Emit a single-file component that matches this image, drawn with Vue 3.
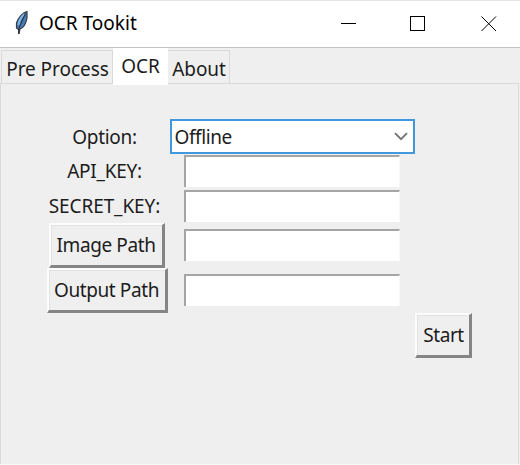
<script setup>
import { ref } from 'vue'

const tabs = ['Pre Process', 'OCR', 'About']
const active = ref('OCR')
</script>

<template>
  <div class="window">
    <header class="titlebar">
      <svg class="feather" width="16" height="26" viewBox="0 0 16 26">
        <path d="M13 1.5C9 2 4 8 2.5 13L2.5 18L4.5 19.5L5 24L6 19C10 18 12 13 13 8Z" fill="#477db9" stroke="#343b43" stroke-width="1.2" />
        <path d="M10.5 4C7 7 5 11 4.5 15" fill="none" stroke="#83b7e8" stroke-width="2" />
        <path d="M11.5 3.5C9 9 7 13 5 18L4.7 24" fill="none" stroke="#26323f" stroke-width="1.1" />
      </svg>
      <span class="title">OCR Tookit</span>
      <svg class="controls" width="156" height="17" viewBox="0 0 156 17" fill="none" stroke="#000" stroke-width="1">
        <path d="M0 8.5H15" />
        <rect x="69.5" y="1.5" width="14" height="14" />
        <path d="M140.5 1.5L155 16M155 1.5L140.5 16" />
      </svg>
    </header>
    <nav class="tabs">
      <button
        v-for="tab in tabs"
        :key="tab"
        class="tab"
        :class="{ active: tab === active }"
        @click="active = tab"
      >{{ tab }}</button>
    </nav>
    <main class="pane">
      <div class="form">
        <label class="tight">Option:</label>
        <div class="combo">
          <span>Offline</span>
          <svg width="14" height="9" viewBox="0 0 14 9"><path d="M1 1.2L7 7.2L13 1.2" fill="none" stroke="#747474" stroke-width="1.9" /></svg>
        </div>
        <i></i>
        <label class="key">API_KEY:</label><input class="entry"><i></i>
        <label>SECRET_KEY:</label><input class="entry"><i></i>
        <button class="push image">Image Path</button><input class="entry raised"><i></i>
        <button class="push output">Output Path</button><input class="entry raised"><i></i>
        <i></i><i></i><button class="push start">Start</button>
      </div>
    </main>
  </div>
</template>

<style>
body { margin: 0; overflow: hidden; }
</style>

<style scoped>
* { box-sizing: border-box; }
.window {
  width: 520px; height: 465px; background: #efefef; display: flex; flex-direction: column;
  font: 19px/24px "Noto Sans", "Open Sans", sans-serif; color: #1c1c1c; white-space: nowrap;
  border-bottom: 1px solid #f8f8f8;
}
button { font: inherit; color: inherit; padding: 0; margin: 0; border-radius: 0; }
.titlebar {
  height: 48px; flex: none; background: #fff; border-top: 1px solid #e5e5e5; border-bottom: 1px solid #c3c3c3;
  display: flex; align-items: center; padding-left: 14px; color: #000;
}
.feather { flex: none; margin-top: -3px; }
.title { width: 311px; padding: 0 0 2px 9px; }
.controls { flex: none; margin-top: -1px; }
.tabs { height: 35px; flex: none; display: flex; align-items: flex-end; padding-left: 1px; }
.tab {
  height: 33px; width: 112px; background: #efefef; border: 1px solid #d9d9d9; border-width: 1px 1px 0 1px;
  display: flex; align-items: center; justify-content: center; padding: 4px 0 0 1px; letter-spacing: -0.05px;
}
.tab.active { width: 55px; height: 37px; background: #fff; border: 0; margin-bottom: -2px; padding: 0 0 1px; z-index: 1; position: relative; }
.tab:last-child { width: 62px; border-left: 0; }
.pane { flex: 1; margin-right: 1px; border: solid #dadada; border-width: 1px 1px 0 1px; padding: 35px 0 0 46px; }
.form {
  display: grid; grid-template-columns: 122px 246px 57px; grid-template-rows: 35px 35px 34px 45px 45px 45px;
  align-items: center; justify-items: center;
}
label { padding-right: 7px; letter-spacing: -0.1px; }
.tight { letter-spacing: -0.3px; }
.key { letter-spacing: -0.25px; padding-bottom: 2px; }
.combo {
  width: 245px; height: 35px; background: #fff; border: 2px solid #4298dd; letter-spacing: -0.4px;
  display: flex; align-items: center; justify-content: space-between; padding: 0 5px 0 3px;
}
.entry {
  width: 216px; height: 32px; background: #fff; border: 0 solid #a5a5a5; border-width: 2px 1px 0 2px;
  border-right-color: #f8f8f8; outline: 0; margin: 0 0 1px; padding: 0 3px; font: inherit; border-radius: 0;
}
.entry.raised { margin-bottom: 2px; }
.push {
  height: 45px; background: #efefef; border: solid; border-width: 2px 3px 3px 2px;
  border-color: #fcfcfc #858585 #858585 #fcfcfc; box-shadow: inset 1px 1px #e2e2e2;
  display: flex; align-items: center; justify-content: center; letter-spacing: -0.4px;
}
.image { width: 116px; margin-right: 3px; }
.output { width: 121px; margin-right: 2px; }
.start { width: 57px; padding-left: 1px; }
</style>
